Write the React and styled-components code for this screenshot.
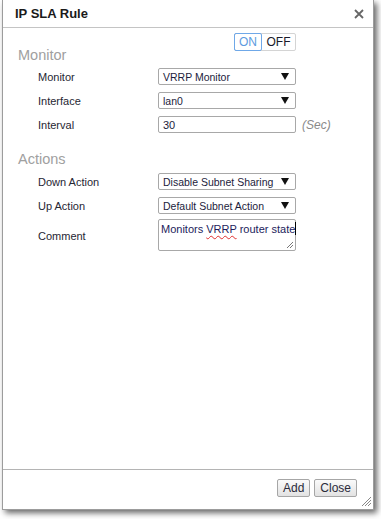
import React from 'react';
import styled, { createGlobalStyle } from 'styled-components';

const GlobalStyle = createGlobalStyle`
    body {
        margin: 0;
        background: #fff;
        font-family: "Liberation Sans", Arial, sans-serif;
    }
`;

const Arrow = () => (
    <svg width="8" height="7" viewBox="0 0 8 7">
        <path d="M0 0 L8 0 L4 7 Z" fill="#111" />
    </svg>
);

const Select = ({ value }) => (
    <SelectBox>
        <span>{value}</span>
        <Arrow />
    </SelectBox>
);

const App = () => {
    return (
        <>
            <GlobalStyle />
            <Page>
                <Dialog>
                    <Header>
                        <Title>IP SLA Rule</Title>
                        <CloseIcon width="10" height="10" viewBox="0 0 10 10">
                            <path d="M1 1 L9 9 M9 1 L1 9" stroke="#666" strokeWidth="1.8" />
                        </CloseIcon>
                    </Header>
                    <Body>
                        <Form>
                            <TopRow>
                                <SectionTitle>Monitor</SectionTitle>
                                <Toggle>
                                    <ToggleOption active>ON</ToggleOption>
                                    <ToggleOption>OFF</ToggleOption>
                                </Toggle>
                            </TopRow>
                            <Fields>
                                <Label>Monitor</Label>
                                <Select value="VRRP Monitor" />
                                <span />
                                <Label>Interface</Label>
                                <Select value="lan0" />
                                <span />
                                <Label>Interval</Label>
                                <TextBox>30</TextBox>
                                <Unit>(Sec)</Unit>
                            </Fields>
                            <SectionTitle spaced>Actions</SectionTitle>
                            <Fields>
                                <Label>Down Action</Label>
                                <Select value="Disable Subnet Sharing" />
                                <span />
                                <Label>Up Action</Label>
                                <Select value="Default Subnet Action" />
                                <span />
                                <Label>Comment</Label>
                                <TextArea>
                                    Monitors <Misspelled>VRRP</Misspelled> router state<Caret />
                                    <Grip width="6" height="6" viewBox="0 0 6 6">
                                        <path d="M6 0 L0 6 M6 3 L3 6" stroke="#777" strokeWidth="1" />
                                    </Grip>
                                </TextArea>
                                <span />
                            </Fields>
                        </Form>
                    </Body>
                    <Footer>
                        <Button>Add</Button>
                        <Button>Close</Button>
                    </Footer>
                    <ResizeGrip width="9" height="9" viewBox="0 0 9 9">
                        <path d="M9 0 L0 9 M9 3 L3 9 M9 6 L6 9" stroke="#888" strokeWidth="1" />
                    </ResizeGrip>
                </Dialog>
            </Page>
        </>
    );
};

const Page = styled.div`
    padding-left: 2px;
    width: 381px;
    height: 519px;
    box-sizing: border-box;
`;

const Dialog = styled.div`
    position: relative;
    width: 372px;
    height: 510px;
    box-sizing: border-box;
    background: #fff;
    border: 1px solid #9c9c9c;
    border-top: none;
    box-shadow: 3px 3px 6px rgba(0, 0, 0, 0.6);
    display: flex;
    flex-direction: column;
`;

const Header = styled.div`
    height: 27px;
    flex-shrink: 0;
    border-bottom: 1px solid #c4c4c4;
    display: flex;
    align-items: center;
    justify-content: space-between;
    padding: 0 9px 0 12px;
`;

const Title = styled.div`
    font-size: 13px;
    font-weight: bold;
    color: #1a1a1a;
`;

const CloseIcon = styled.svg`
    display: block;
`;

const Body = styled.div`
    flex: 1;
    padding: 5px 0 0 15px;
`;

const Form = styled.div`
    width: 320px;
`;

const TopRow = styled.div`
    width: 278px;
    display: flex;
    justify-content: space-between;
    align-items: flex-start;
`;

const SectionTitle = styled.div`
    font-size: 14.5px;
    line-height: 18px;
    color: #a0a0a0;
    margin-top: ${({ spaced }) => (spaced ? '17px' : '13px')};
    margin-bottom: ${({ spaced }) => (spaced ? '5px' : '4px')};
`;

const Toggle = styled.div`
    display: flex;
    width: 62px;
    height: 18px;
    box-sizing: border-box;
    border: 1px solid #d4d4d4;
    border-radius: 2px;
`;

const ToggleOption = styled.div`
    flex: ${({ active }) => (active ? '0 0 28px' : '1')};
    margin: -1px 0 0 ${({ active }) => (active ? '-1px' : '0')};
    height: 18px;
    box-sizing: border-box;
    font-size: 12px;
    line-height: 16px;
    text-align: center;
    border: 1px solid ${({ active }) => (active ? '#6fa8e8' : 'transparent')};
    border-radius: 2px;
    color: ${({ active }) => (active ? '#5d9be0' : '#1a1a2a')};
`;

const Fields = styled.div`
    display: grid;
    grid-template-columns: 140px 138px auto;
    row-gap: 7px;
    align-items: center;
`;

const Label = styled.div`
    padding-left: 20px;
    font-size: 11px;
    color: #262633;
`;

const SelectBox = styled.div`
    height: 17px;
    box-sizing: border-box;
    border: 1px solid #a8a8a8;
    border-radius: 2px;
    padding: 0 6px 0 4px;
    display: flex;
    align-items: center;
    justify-content: space-between;
    font-size: 10.5px;
    color: #1c1c3c;
`;

const TextBox = styled.div`
    height: 17px;
    box-sizing: border-box;
    border: 1px solid #a8a8a8;
    border-radius: 2px;
    padding: 0 4px;
    display: flex;
    align-items: center;
    font-size: 11px;
    color: #1c1c3c;
`;

const Unit = styled.div`
    padding-left: 6px;
    font-size: 12px;
    font-style: italic;
    color: #8a8a8a;
`;

const TextArea = styled.div`
    position: relative;
    height: 32px;
    box-sizing: border-box;
    border: 1px solid #a8a8a8;
    border-radius: 2px;
    padding: 2px;
    font-size: 11px;
    line-height: 14px;
    color: #1c1c5c;
    white-space: nowrap;
    margin-top: -2px;
`;

const Misspelled = styled.span`
    text-decoration: underline wavy #e03030;
    text-decoration-thickness: 1px;
    text-underline-offset: 2px;
`;

const Caret = styled.span`
    display: inline-block;
    width: 1px;
    height: 13px;
    background: #000;
    vertical-align: -2px;
`;

const Grip = styled.svg`
    position: absolute;
    right: 2px;
    bottom: 2px;
`;

const Footer = styled.div`
    height: 40px;
    flex-shrink: 0;
    border-top: 1px solid #b4b4b4;
    box-sizing: border-box;
    display: flex;
    justify-content: flex-end;
    align-items: flex-start;
    gap: 4px;
    padding: 9px 16px 0 0;
`;

const Button = styled.button`
    height: 18px;
    padding: 0 5px;
    border: 1px solid #a6a6a6;
    border-radius: 2px;
    background: linear-gradient(#fafafa, #e2e2e2);
    font-family: "Liberation Sans", Arial, sans-serif;
    font-size: 12px;
    color: #2a2a3a;
    line-height: 16px;
`;

const ResizeGrip = styled.svg`
    position: absolute;
    right: 2px;
    bottom: 3px;
`;

export default App;
